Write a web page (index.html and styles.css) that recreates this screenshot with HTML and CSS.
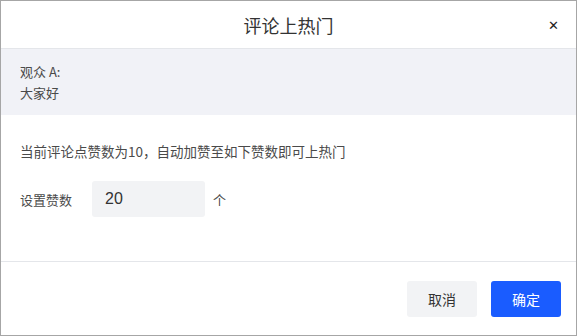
FILE: index.html
```html
<!DOCTYPE html>
<html lang="zh-CN">
  <head>
    <meta charset="UTF-8" />
    <title>评论上热门</title>
    <link rel="stylesheet" href="styles.css">
  </head>
  <body>
    <div class="dialog">
      <div class="dialog-header">
        <span class="dialog-title">评论上热门</span>
        <span class="dialog-close">&#x2715;</span>
      </div>
      <div class="comment-box">
        <div>观众 A:</div>
        <div>大家好</div>
      </div>
      <div class="dialog-body">
        <p class="tip">当前评论点赞数为10，自动加赞至如下赞数即可上热门</p>
        <div class="form-row">
          <label for="likes">设置赞数</label>
          <input type="text" id="likes" value="20" />
          <span class="unit">个</span>
        </div>
      </div>
      <div class="dialog-footer">
        <button type="button" class="btn btn-cancel">取消</button>
        <button type="button" class="btn btn-primary">确定</button>
      </div>
    </div>
  </body>
</html>
```

FILE: styles.css
```css
body {
  margin: 0;
  font-family: "Noto Sans CJK SC", "Noto Sans", sans-serif;
  color: #333;
}
.dialog {
  width: 577px;
  height: 336px;
  box-sizing: border-box;
  border: 1px solid #a6a6a6;
  background: #fff;
  display: flex;
  flex-direction: column;
}
.dialog-header {
  height: 47px;
  border-bottom: 1px solid #e4e6ea;
  display: flex;
  align-items: center;
  justify-content: center;
  position: relative;
}
.dialog-title {
  font-size: 18px;
  color: #333;
}
.dialog-close {
  position: absolute;
  right: 17px;
  top: 14px;
  font-size: 13px;
  color: #222;
}
.comment-box {
  background-color: #f1f2f7;
  padding: 12px 19px;
  font-size: 13px;
  line-height: 21px;
  color: #4a4a4a;
}
.dialog-body {
  padding: 26px 19px 0;
  flex: 1;
  border-bottom: 1px solid #e4e6ea;
}
.tip {
  margin: 0;
  font-size: 13.5px;
  line-height: 20px;
  color: #4a4a4a;
}
.form-row {
  display: flex;
  align-items: center;
  margin-top: 20px;
  font-size: 13px;
  color: #4a4a4a;
}
.form-row label {
  width: 72px;
}
.form-row input {
  width: 113px;
  height: 36px;
  box-sizing: border-box;
  border: none;
  border-radius: 3px;
  background-color: #f2f3f5;
  padding: 0 13px;
  font-family: "Liberation Sans", "Noto Sans CJK SC", sans-serif;
  font-size: 16px;
  color: #333;
  outline: none;
}
.unit {
  margin-left: 8px;
}
.dialog-footer {
  height: 73px;
  display: flex;
  justify-content: flex-end;
  align-items: flex-start;
  padding: 19px 15px 0 0;
  box-sizing: border-box;
  gap: 14px;
}
.btn {
  width: 70px;
  height: 36px;
  border: none;
  border-radius: 3px;
  font-family: "Noto Sans CJK SC", sans-serif;
  font-size: 14px;
  cursor: pointer;
}
.btn-cancel {
  background-color: #f2f3f5;
  color: #333;
}
.btn-primary {
  background-color: #1a5cff;
  color: #fff;
}
```
